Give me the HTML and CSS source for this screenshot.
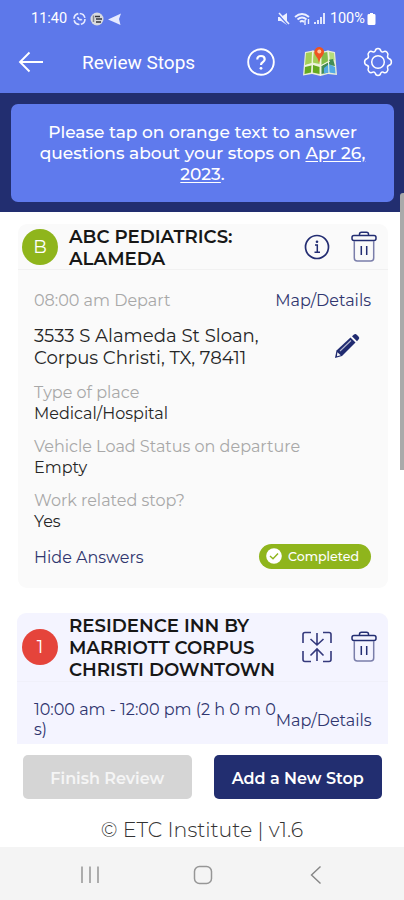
FILE: index.html
```
<!DOCTYPE html>
<html lang="en">
<head>
<meta charset="utf-8">
<meta name="viewport" content="width=device-width">
<title>Review Stops</title>
<link rel="stylesheet" href="styles.css">
</head>
<body>
<svg class="defs" aria-hidden="true">
  <symbol id="trash" viewBox="0 0 26 32">
    <g fill="none" stroke="#232d72" stroke-width="1.5" stroke-linejoin="round">
      <path d="M8.500 4V3.200Q8.500 1.300 10.500 1.300H15.500Q17.500 1.300 17.500 3.200V4"/>
      <rect x="1" y="4.500" width="24" height="5" rx="2"/>
      <path d="M3.300 10V27Q3.300 30 6.300 30H19.700Q22.700 30 22.700 27V10" stroke="#7a7eaa"/>
      <path d="M10.300 15V24M15.700 15V24"/>
    </g>
  </symbol>
</svg>
<header class="top">
  <div class="status">
    <span class="clock">11:40</span>
    <svg class="notes" width="50" height="16" viewBox="0 0 50 16">
      <circle cx="7.500" cy="8" r="5.500" fill="none" stroke="#e6eaff" stroke-width="1.600" stroke-dasharray="7 1.500"/>
      <path d="M5 6Q6 11 10.500 9L9 7.500 7.800 8.300 6.500 6Z" fill="#e6eaff"/>
      <circle cx="25" cy="8" r="6.500" fill="#d8dade"/>
      <path d="M23 5.500H28M24 8H30M24 11H29" stroke="#33363e" stroke-width="1.700"/>
      <path d="M21.500 4.500V11" stroke="#85878d" stroke-width="1.500"/>
      <path d="M36 8.500 49 2.500 47 8 48.500 14 43 11.500Z" fill="#e6eaff"/>
    </svg>
    <svg class="signals" width="50" height="16" viewBox="0 0 50 16">
      <path d="M1 6H4L10 2V14L4 10H1Z" fill="#edf0ff"/>
      <path d="M1 3 11 14" stroke="#5d78ea" stroke-width="1.500"/><path d="M2 2 12 13" stroke="#edf0ff" stroke-width="1.500"/>
      <g fill="none" stroke="#edf0ff" stroke-width="1.900"><path d="M18 6Q25 0 32 6M20.500 8.500Q25 4.500 29.500 8.500M23 11Q25 9 27 11"/><path d="M28 9V14M31.500 8V13" stroke-width="1.400"/></g>
      <path d="M38 13V11M41 13V9" stroke="#edf0ff" stroke-width="1.800"/><path d="M44 13V6M47 13V2" stroke="#edf0ff" stroke-width="1.800"/>
    </svg>
    <span class="charge">100%</span>
    <svg class="battery" width="9" height="14" viewBox="0 0 9 14"><path d="M3 1H6V2H7.500Q8.500 2 8.500 3.500V11.500Q8.500 13 7 13H2Q.5 13 .5 11.500V3.500Q.5 2 1.500 2H3Z" fill="#fff"/></svg>
  </div>
  <div class="bar">
    <svg class="back" width="26" height="22" viewBox="0 0 26 22"><path d="M11.500 1.500 2 11 11.500 20.500M2 11H25" fill="none" stroke="#fff" stroke-width="1.900"/></svg>
    <h1>Review Stops</h1>
    <svg class="help" width="30" height="30" viewBox="0 0 30 30"><circle cx="15" cy="15" r="12.800" fill="none" stroke="#fff" stroke-width="1.900"/><path d="M11.300 12.500Q11.300 9 15 9T18.700 12.200Q18.700 14 16.700 15.200 15 16.200 15 18" fill="none" stroke="#fff" stroke-width="2.200"/><circle cx="15" cy="21.300" r="1.400" fill="#fff"/></svg>
    <svg class="map" width="36" height="32" viewBox="0 0 36 32">
      <path d="M3 6 11 4.500 18.500 6 26 4.500 33 6 35 29 26 28 18.500 30 10 28 1 29.500Z" fill="#e9eed7"/>
      <path d="M4 7 10 6 9.500 17 3 19ZM11.500 6 17.500 7V18L10.500 16.500Z" fill="#a4cf55"/>
      <path d="M3 21 9.500 19.500 9 26.500 2.500 28ZM11 19 17.500 21V28L10.500 26.500Z" fill="#65a91f"/>
      <path d="M19.500 7 25.500 6 26.500 15 19.500 19Z" fill="#83bd4b"/><path d="M27 6 32 7 32.500 14 28 15Z" fill="#b5dd7b"/>
      <path d="M19.500 20 26 16 26.500 26.500 19.500 28ZM26 14 31 13 33 20 27 19Z" fill="#438d58"/>
      <path d="M22 22 27 18 33 21 33.500 27.500 27 26.500 22 27.500Z" fill="#54aae5"/>
      <path d="M11 4.500 10 28M18.500 6V30M26 4.500 27 28M2 20 10 18 18.500 20 28 15" fill="none" stroke="#f2f5df" stroke-width="1"/>
      <path d="M17 17Q16 12 13.300 9Q11 5 14 2.200 17 0 20.500 2.200 23.300 5 21 9 18 12 17 17Z" fill="#ef5421"/><circle cx="17.300" cy="5.500" r="2" fill="#ffc79c"/>
    </svg>
    <svg class="gear" width="30" height="30" viewBox="0 0 30 30"><g fill="none" stroke="#fff" stroke-width="1.500" stroke-linejoin="round"><path d="M12.300 3.800Q12.600 1.600 15 1.600T17.700 3.800Q18.500 5.600 20.200 4.900 22.300 3.500 24 5.200T24.600 9Q24.100 11 26.100 11.700 28.400 12.500 28.400 15T26.100 18.300Q24.100 19 24.600 21 25.600 23 24 24.800T20.200 25.100Q18.500 24.400 17.700 26.200 17.400 28.400 15 28.400T12.300 26.200Q11.500 24.400 9.800 25.100 7.700 26.500 6 24.800T5.400 21Q5.900 19 3.900 18.300 1.600 17.500 1.600 15T3.900 11.700Q5.900 11 5.400 9 4.400 7 6 5.200T9.800 4.900Q11.500 5.600 12.300 3.800Z"/><circle cx="15" cy="15" r="6.300"/></g></svg>
  </div>
</header>
<main>
  <section class="banner"><p>Please tap on orange text to answer<br>questions about your stops on <u>Apr 26,</u><br><u>2023</u>.</p></section>
  <article class="card first">
    <div class="head">
      <span class="dot green">B</span>
      <h2>ABC PEDIATRICS:<br>ALAMEDA</h2>
      <svg class="act" width="30" height="30" viewBox="0 0 30 30"><circle cx="15" cy="15" r="11.500" fill="none" stroke="#232d72" stroke-width="1.700"/><path d="M13 13H15.300V20M12.500 20.300H18" fill="none" stroke="#232d72" stroke-width="1.500"/><circle cx="15" cy="9.800" r="1.300" fill="#232d72"/></svg>
      <svg class="bin" width="26" height="32"><use href="#trash"/></svg>
    </div>
    <div class="body">
      <div class="row time"><span class="muted">08:00 am Depart</span><a>Map/Details</a></div>
      <div class="row address"><p>3533 S Alameda St Sloan,<br>Corpus Christi, TX, 78411</p>
        <svg class="pencil" width="26" height="26" viewBox="0 0 26 26"><path d="M1 25 2.500 17.500 16.500 4.500 21.500 9.500 8 23Z" fill="#202b70"/><path d="M18 3.200 20 1.500Q21.500.5 23 2L24.500 3.500Q26 5 24.700 6.300L23 8.200Z" fill="#202b70"/><path d="M3.300 19.200 6.800 22.300 3 23.200Z" fill="#fafafa"/><path d="M6 18 17 7.500" stroke="#b6b9d1" stroke-width="1.100"/></svg>
      </div>
      <dl>
        <div><dt>Type of place</dt><dd>Medical/Hospital</dd></div>
        <div><dt>Vehicle Load Status on departure</dt><dd>Empty</dd></div>
        <div><dt>Work related stop?</dt><dd>Yes</dd></div>
      </dl>
      <div class="row foot"><a class="hide">Hide Answers</a>
        <span class="done"><svg width="16" height="16" viewBox="0 0 16 16"><circle cx="8" cy="8" r="7.800" fill="#fff"/><path d="M4 8 7 10.700 12 5.500" fill="none" stroke="#8fb51c" stroke-width="1.400"/></svg><span>Completed</span></span>
      </div>
    </div>
  </article>
  <article class="card second">
    <div class="head">
      <span class="dot red">1</span>
      <h2>RESIDENCE INN BY<br>MARRIOTT CORPUS<br>CHRISTI DOWNTOWN</h2>
      <svg class="act" width="30" height="32" viewBox="0 0 30 32"><g fill="none" stroke="#34397c" stroke-width="1.600"><path d="M9 1.500H3Q1 1.500 1 3.500V12M21 1.500H27Q29 1.500 29 3.500V12M9 30.500H3Q1 30.500 1 28.500V20M21 30.500H27Q29 30.500 29 28.500V20"/><path d="M15 2V14M8.500 8 15 14 21.500 8M15 30V18M8.500 24.500 15 18 21.500 24.500"/></g></svg>
      <svg class="bin" width="26" height="32"><use href="#trash"/></svg>
    </div>
    <div class="body row"><span class="span">10:00 am - 12:00 pm (2 h 0 m 0<br>s)</span><a>Map/Details</a></div>
  </article>
  <div class="buttons"><button class="off" disabled>Finish Review</button><button>Add a New Stop</button></div>
  <p class="copy">© ETC Institute | v1.6</p>
  <i class="scroll"></i>
</main>
<nav>
  <svg width="20" height="20" viewBox="0 0 20 20"><path d="M2 1.500V18M10 1.500V18M18 1.500V18" stroke="#a0a0a0" stroke-width="1.700"/></svg>
  <svg width="20" height="20" viewBox="0 0 20 20"><rect x="1.500" y="1.500" width="17" height="17" rx="5" fill="none" stroke="#969696" stroke-width="1.500"/></svg>
  <svg width="20" height="20" viewBox="0 0 20 20"><path d="M14.500 1.500 5.500 10 14.500 18.500" fill="none" stroke="#858585" stroke-width="1.400"/></svg>
</nav>
</body>
</html>
```
FILE: styles.css
```
* { box-sizing: border-box; }
body { margin: 0; width: 404px; height: 900px; overflow: hidden; background: #fff; font-family: Montserrat, Inter, sans-serif; color: #262626; white-space: nowrap; }
h1, h2, p, dl, dd { margin: 0; }
svg { display: block; flex: none; }
.defs { display: none; }
.top { height: 93px; background: #5d78ea; color: #fff; font-family: Roboto, sans-serif; }
.status { height: 36px; padding: 1px 28px 0 31px; display: flex; align-items: center; font-size: 14.5px; line-height: 36px; }
.clock { width: 41px; }
.signals { margin-left: auto; margin-right: 3px; }
.charge { width: 37px; letter-spacing: -.1px; }
.bar { height: 50px; display: flex; align-items: center; padding: 1px 11px 0 18px; }
h1 { font-size: 19px; font-weight: 400; margin-left: 38px; width: 164px; padding-top: 2px; }
.map { margin-left: 26px; }
.gear { margin-left: 25px; }
main { position: relative; height: 754px; }
.banner { height: 119px; padding: 11px 10px 10px 11px; background: #222e70; }
.banner p { height: 98px; padding-top: 18px; border-radius: 7px; background: #5f7aed; color: #fff; font-size: 17px; line-height: 21px; font-weight: 500; text-align: center; }
.banner u { text-underline-offset: 2px; }
.card { margin-left: 18px; width: 370px; border-radius: 9px; background: #fafafa; }
.first { height: 364px; margin-top: 12px; }
.head { display: flex; align-items: center; height: 46px; padding: 0 11px 0 4px; border-bottom: 1px solid #f1f1f1; }
.dot { flex: none; width: 36px; height: 36px; border-radius: 50%; text-align: center; font-size: 18px; line-height: 36px; color: #fff; font-weight: 400; }
.green { background: #8fb51c; }
.red { background: #e5443b; }
h2 { width: 230px; margin-left: 11px; padding-top: 2px; font-size: 18.2px; line-height: 22px; font-weight: 600; color: #171717; }
.act { margin-left: 3px; }
.bin { margin-left: auto; }
a, .span { color: #30366f; font-size: 16px; }
.row { display: flex; justify-content: space-between; align-items: center; }
.body { padding: 0 17px 0 16px; }
.muted, dt { color: #a8a8a8; }
.time { height: 60px; font-size: 16px; }
.address { height: 44px; margin-top: -5px; padding-right: 11px; font-size: 18.1px; line-height: 22px; }
.pencil { margin-top: -2px; }
dl { padding-top: 13px; font-size: 16px; line-height: 21px; }
dl > div { height: 54px; }
.foot { height: 26px; margin-top: -1px; }
.hide { padding-top: 2px; }
.done { display: flex; align-items: center; width: 112px; height: 25px; padding-left: 7px; gap: 6px; border-radius: 13px; background: #8fb51c; color: #fff; font-size: 12.6px; font-weight: 500; }
.second { height: 131px; margin: 25px 0 0 17px; width: 371px; background: #f4f4ff; border-radius: 9px 9px 0 0; }
.second .head { height: 69px; padding-left: 5px; border-color: #f0f0fa; }
.second .body { height: 62px; padding-left: 17px; padding-top: 14px; }
.span { line-height: 20px; margin-top: -1px; }
.buttons { display: flex; gap: 22px; padding: 11px 22px 0 23px; }
button { flex: 1; height: 44px; padding: 2px 0 0; border: 0; border-radius: 5px; background: #222e70; color: #fff; font: 600 16px Montserrat, Inter, sans-serif; }
.off { background: #d5d5d5; color: #f5f5f5; }
.copy { margin-top: 18px; text-align: center; font-size: 20.5px; line-height: 25px; font-weight: 300; color: #333; }
.scroll { position: absolute; right: 0; top: 100px; width: 4px; height: 277px; border-radius: 3px 0 0; background: #aaa; }
nav { height: 53px; display: flex; gap: 93px; align-items: center; padding: 3px 0 0 80px; background: #f4f4f4; }
```
